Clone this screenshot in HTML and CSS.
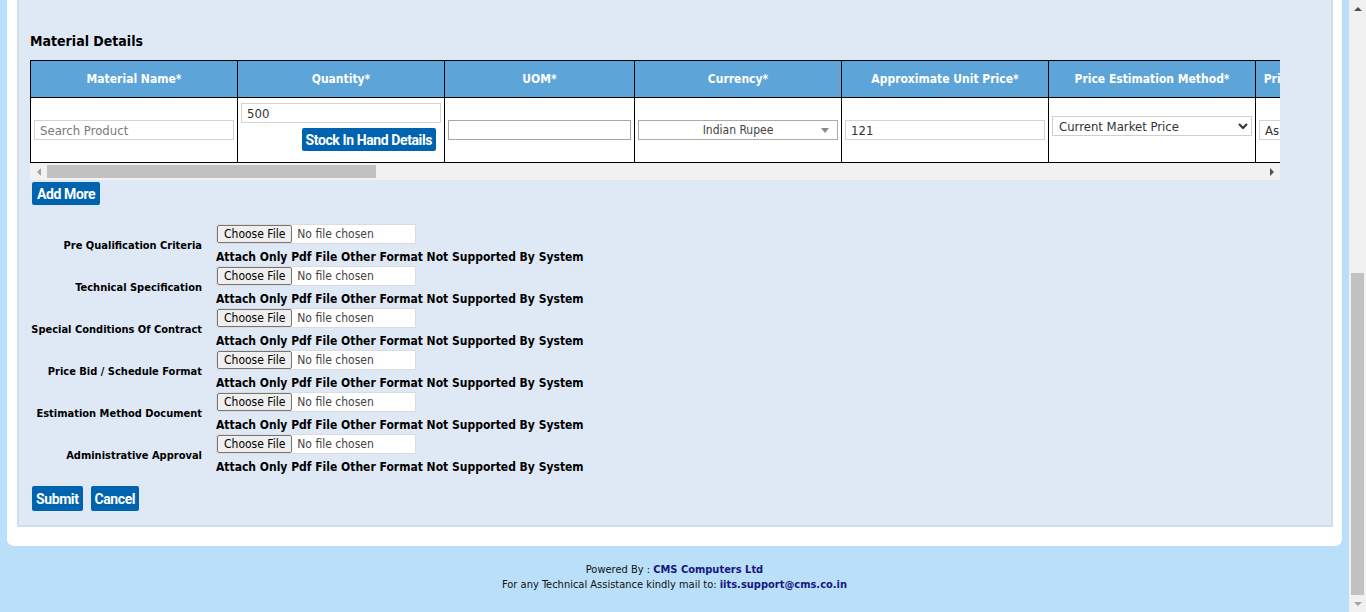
FILE: index.html
```html
<!DOCTYPE html>
<html lang="en">
<head>
<meta charset="utf-8">
<title>Material Details</title>
<link rel="stylesheet" href="styles.css">
</head>
<body>
<div class="viewport">
  <div class="page">
    <div class="sheet">
      <div class="panel">
        <h3 class="section-title">Material Details</h3>
        <div class="table-scroll">
          <div class="table-clip">
            <table class="mat-table">
              <colgroup>
                <col class="c207"><col class="c207"><col class="c190"><col class="c207"><col class="c207"><col class="c207"><col class="c-last">
              </colgroup>
              <thead>
                <tr>
                  <th>Material Name*</th>
                  <th>Quantity*</th>
                  <th>UOM*</th>
                  <th>Currency*</th>
                  <th>Approximate Unit Price*</th>
                  <th>Price Estimation Method*</th>
                  <th>Price Justification*</th>
                </tr>
              </thead>
              <tbody>
                <tr>
                  <td><input class="inp" type="text" placeholder="Search Product"></td>
                  <td class="qty-cell">
                    <input class="inp" type="text" value="500">
                    <button class="btn stock-btn" type="button">Stock In Hand Details</button>
                  </td>
                  <td><input class="inp inp-full inp-dark" type="text"></td>
                  <td>
                    <div class="s2"><span class="s2-text">Indian Rupee</span><span class="s2-arrow"></span></div>
                  </td>
                  <td><input class="inp" type="text" value="121"></td>
                  <td>
                    <select class="sel">
                      <option>Current Market Price</option>
                    </select>
                  </td>
                  <td><input class="inp inp-full" type="text" value="As per market rate"></td>
                </tr>
              </tbody>
            </table>
          </div>
          <div class="hscroll">
            <span class="harr harr-left"></span>
            <div class="htrack"><div class="hthumb"></div></div>
            <span class="harr harr-right"></span>
          </div>
        </div>

        <button class="btn add-more" type="button">Add More</button>

        <div class="uploads">
          <div class="up-row">
            <label class="up-label">Pre Qualification Criteria</label>
            <div class="up-field"><input class="file" type="file"><div class="up-note">Attach Only Pdf File Other Format Not Supported By System</div></div>
          </div>
          <div class="up-row">
            <label class="up-label">Technical Specification</label>
            <div class="up-field"><input class="file" type="file"><div class="up-note">Attach Only Pdf File Other Format Not Supported By System</div></div>
          </div>
          <div class="up-row">
            <label class="up-label">Special Conditions Of Contract</label>
            <div class="up-field"><input class="file" type="file"><div class="up-note">Attach Only Pdf File Other Format Not Supported By System</div></div>
          </div>
          <div class="up-row">
            <label class="up-label">Price Bid / Schedule Format</label>
            <div class="up-field"><input class="file" type="file"><div class="up-note">Attach Only Pdf File Other Format Not Supported By System</div></div>
          </div>
          <div class="up-row">
            <label class="up-label">Estimation Method Document</label>
            <div class="up-field"><input class="file" type="file"><div class="up-note">Attach Only Pdf File Other Format Not Supported By System</div></div>
          </div>
          <div class="up-row">
            <label class="up-label">Administrative Approval</label>
            <div class="up-field"><input class="file" type="file"><div class="up-note">Attach Only Pdf File Other Format Not Supported By System</div></div>
          </div>
        </div>

        <div class="actions">
          <button class="btn act-btn" type="button">Submit</button>
          <button class="btn act-btn" type="button">Cancel</button>
        </div>
      </div>
    </div>
    <footer class="footer">
      <div>Powered By : <b>CMS Computers Ltd</b></div>
      <div>For any Technical Assistance kindly mail to: <b>iits.support@cms.co.in</b></div>
    </footer>
  </div>
  <div class="vscroll">
    <span class="varr varr-up"></span>
    <div class="vtrack"><div class="vthumb"></div></div>
    <span class="varr varr-down"></span>
  </div>
</div>
</body>
</html>
```

FILE: styles.css
```css
* { box-sizing: border-box; }

html, body {
  margin: 0;
  padding: 0;
  height: 612px;
  overflow: hidden;
}

body {
  font-family: "DejaVu Sans Condensed", "DejaVu Sans", sans-serif;
  background: #b9dff9;
  color: #000;
}

.viewport {
  display: flex;
  height: 612px;
}

.page {
  flex: 1;
  min-width: 0;
  display: flex;
  flex-direction: column;
  padding: 0 7px;
}

.sheet {
  background: #fff;
  border-radius: 0 0 7px 7px;
  padding: 0 9px 19px 10px;
}

.panel {
  background: #dfe9f5;
  border: 2px solid #d3dde9;
  border-top: 0;
  padding: 33px 11px 14px 11px;
}

.section-title {
  margin: 0 0 10px;
  font-size: 14px;
  line-height: 17px;
  font-weight: bold;
}

/* ---------- table ---------- */
.table-scroll { width: 1250px; }
.table-clip { overflow: hidden; }

.mat-table {
  border-collapse: collapse;
  table-layout: fixed;
  width: 1355px;
}
.c207 { width: 207px; }
.c190 { width: 190px; }
.c-last { width: 129px; }

.mat-table th,
.mat-table td { border: 1px solid #000; }

.mat-table th {
  background: #5da4d8;
  color: #fff;
  font-size: 12px;
  font-weight: bold;
  height: 37px;
  padding: 0 4px;
  text-align: center;
  white-space: nowrap;
  overflow: hidden;
}

.mat-table td {
  background: #fff;
  height: 65px;
  padding: 3px;
  vertical-align: middle;
  overflow: hidden;
}

.inp {
  display: block;
  width: 200px;
  height: 20px;
  border: 1px solid #d4d4d4;
  padding: 0 5px;
  font-family: "DejaVu Sans Condensed", "DejaVu Sans", sans-serif;
  font-size: 13px;
  color: #333;
  background: #fff;
  outline: none;
}
.inp::placeholder { color: #7a7a7a; }
.inp-full { width: 100%; }
.inp-dark { border-color: #a6a6a6; }

.mat-table td.qty-cell {
  vertical-align: top;
  padding-top: 5px;
}

.stock-btn {
  display: block;
  margin: 5px 5px 0 auto;
  padding: 0 4px;
}

.s2 {
  position: relative;
  width: 200px;
  height: 20px;
  border: 1px solid #aaa;
  background: #fff;
  text-align: center;
  font-size: 12px;
  line-height: 18px;
  color: #444;
}
.s2-arrow {
  position: absolute;
  right: 8px;
  top: 7px;
  border-left: 4px solid transparent;
  border-right: 4px solid transparent;
  border-top: 5px solid #888;
}

.sel {
  display: block;
  width: 200px;
  height: 20px;
  margin-bottom: 8px;
  border: 1px solid #cfcfcf;
  border-radius: 0;
  background: #fff;
  font-family: "DejaVu Sans Condensed", "DejaVu Sans", sans-serif;
  font-size: 13px;
  color: #333;
  padding: 0 2px;
}

/* ---------- fake horizontal scrollbar ---------- */
.hscroll {
  display: flex;
  height: 17px;
  background: #f1f1f1;
}
.harr {
  width: 17px;
  height: 17px;
  display: flex;
  align-items: center;
  justify-content: center;
}
.harr::before {
  content: "";
  border-top: 4px solid transparent;
  border-bottom: 4px solid transparent;
}
.harr-left::before { border-right: 4px solid #a3a3a3; }
.harr-right::before { border-left: 4px solid #505050; }
.htrack {
  flex: 1;
  padding: 2px 0;
}
.hthumb {
  width: 329px;
  height: 13px;
  background: #c1c1c1;
}

/* ---------- buttons ---------- */
.btn {
  font-family: Roboto, "Liberation Sans", sans-serif;
  font-weight: bold;
  font-size: 14px;
  letter-spacing: -0.4px;
  color: #fff;
  background: #0063b0;
  border: 0;
  border-radius: 2px;
  height: 23px;
  padding: 0 4px;
  cursor: pointer;
}

.add-more {
  display: block;
  margin: 2px 0 0 2px;
  padding: 0 5px;
}

/* ---------- uploads ---------- */
.uploads { margin-top: 19px; }

.up-row {
  display: grid;
  grid-template-columns: 172px max-content;
  column-gap: 14px;
  height: 42px;
  align-items: center;
}

.up-label {
  text-align: right;
  font-size: 11px;
  font-weight: bold;
}

.file {
  display: block;
  width: 200px;
  height: 20px;
  background: #fff;
  border: 1px solid #dcdcdc;
  padding: 0;
  font-family: "DejaVu Sans Condensed", "DejaVu Sans", sans-serif;
  font-size: 12px;
  color: #444;
}
.file::file-selector-button {
  height: 18px;
  margin: 0 5px 0 0;
  padding: 0 6px;
  border: 1px solid #767676;
  border-radius: 2px;
  background: #efefef;
  font-family: "DejaVu Sans Condensed", "DejaVu Sans", sans-serif;
  font-size: 12px;
  color: #000;
}

.up-note {
  font-size: 12px;
  font-weight: bold;
  line-height: 18px;
  padding-top: 4px;
  white-space: nowrap;
}

.actions {
  display: flex;
  gap: 8px;
  margin: 10px 0 0 2px;
}
.act-btn {
  height: 25px;
}

/* ---------- footer ---------- */
.footer {
  flex: 1;
  text-align: center;
  padding-top: 16px;
  font-size: 11px;
  line-height: 15px;
  color: #111;
}
.footer b { color: #17177f; }

/* ---------- fake vertical scrollbar ---------- */
.vscroll {
  width: 17px;
  background: #f1f1f1;
  display: flex;
  flex-direction: column;
}
.varr {
  height: 17px;
  display: flex;
  align-items: center;
  justify-content: center;
}
.varr::before {
  content: "";
  border-left: 4px solid transparent;
  border-right: 4px solid transparent;
}
.varr-up::before { border-bottom: 4px solid #505050; }
.varr-down::before { border-top: 4px solid #a3a3a3; }
.vtrack {
  flex: 1;
  padding: 0 2px;
  display: flex;
  flex-direction: column;
  justify-content: flex-end;
}
.vthumb {
  height: 322px;
  background: #c1c1c1;
}
```
